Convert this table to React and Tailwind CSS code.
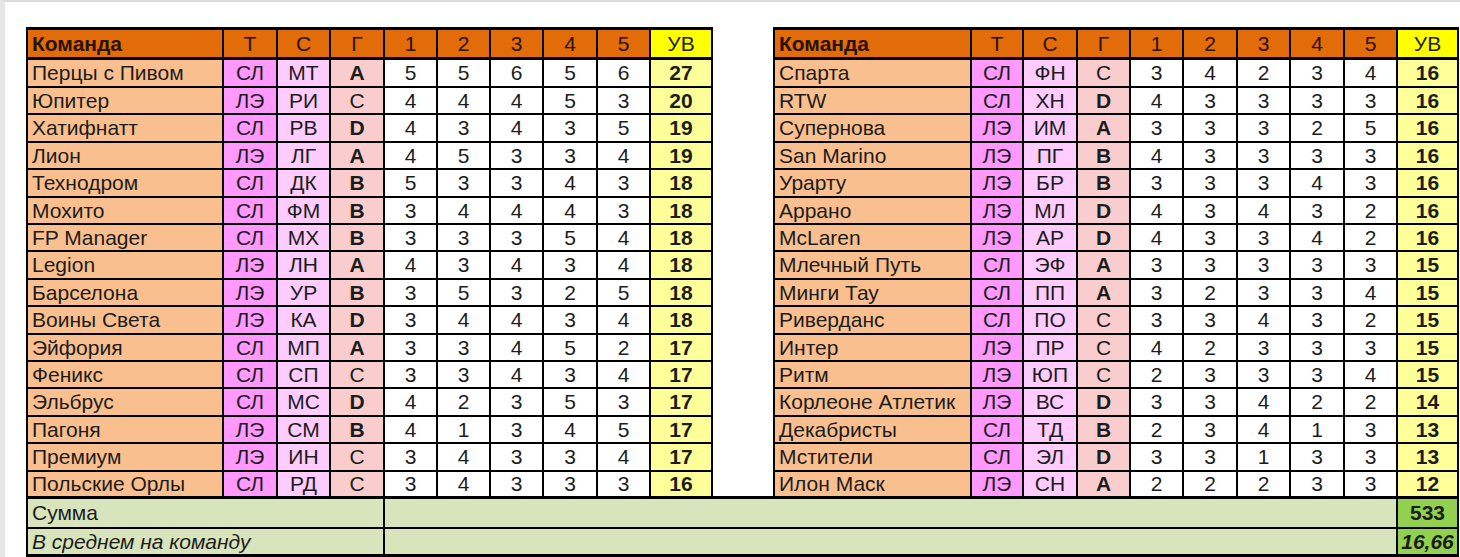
const left = [
  ['Перцы с Пивом', 'СЛ', 'МТ', 'A', 5, 5, 6, 5, 6, 27],
  ['Юпитер', 'ЛЭ', 'РИ', 'C', 4, 4, 4, 5, 3, 20],
  ['Хатифнатт', 'СЛ', 'РВ', 'D', 4, 3, 4, 3, 5, 19],
  ['Лион', 'ЛЭ', 'ЛГ', 'A', 4, 5, 3, 3, 4, 19],
  ['Технодром', 'СЛ', 'ДК', 'B', 5, 3, 3, 4, 3, 18],
  ['Мохито', 'СЛ', 'ФМ', 'B', 3, 4, 4, 4, 3, 18],
  ['FP Manager', 'СЛ', 'МХ', 'B', 3, 3, 3, 5, 4, 18],
  ['Legion', 'ЛЭ', 'ЛН', 'A', 4, 3, 4, 3, 4, 18],
  ['Барселона', 'ЛЭ', 'УР', 'B', 3, 5, 3, 2, 5, 18],
  ['Воины Света', 'ЛЭ', 'КА', 'D', 3, 4, 4, 3, 4, 18],
  ['Эйфория', 'СЛ', 'МП', 'A', 3, 3, 4, 5, 2, 17],
  ['Феникс', 'СЛ', 'СП', 'C', 3, 3, 4, 3, 4, 17],
  ['Эльбрус', 'СЛ', 'МС', 'D', 4, 2, 3, 5, 3, 17],
  ['Пагоня', 'ЛЭ', 'СМ', 'B', 4, 1, 3, 4, 5, 17],
  ['Премиум', 'ЛЭ', 'ИН', 'C', 3, 4, 3, 3, 4, 17],
  ['Польские Орлы', 'СЛ', 'РД', 'C', 3, 4, 3, 3, 3, 16],
];

const right = [
  ['Спарта', 'СЛ', 'ФН', 'C', 3, 4, 2, 3, 4, 16],
  ['RTW', 'СЛ', 'ХН', 'D', 4, 3, 3, 3, 3, 16],
  ['Супернова', 'ЛЭ', 'ИМ', 'A', 3, 3, 3, 2, 5, 16],
  ['San Marino', 'ЛЭ', 'ПГ', 'B', 4, 3, 3, 3, 3, 16],
  ['Урарту', 'ЛЭ', 'БР', 'B', 3, 3, 3, 4, 3, 16],
  ['Аррано', 'ЛЭ', 'МЛ', 'D', 4, 3, 4, 3, 2, 16],
  ['McLaren', 'ЛЭ', 'АР', 'D', 4, 3, 3, 4, 2, 16],
  ['Млечный Путь', 'СЛ', 'ЭФ', 'A', 3, 3, 3, 3, 3, 15],
  ['Минги Тау', 'СЛ', 'ПП', 'A', 3, 2, 3, 3, 4, 15],
  ['Риверданс', 'СЛ', 'ПО', 'C', 3, 3, 4, 3, 2, 15],
  ['Интер', 'ЛЭ', 'ПР', 'C', 4, 2, 3, 3, 3, 15],
  ['Ритм', 'ЛЭ', 'ЮП', 'C', 2, 3, 3, 3, 4, 15],
  ['Корлеоне Атлетик', 'ЛЭ', 'ВС', 'D', 3, 3, 4, 2, 2, 14],
  ['Декабристы', 'СЛ', 'ТД', 'B', 2, 3, 4, 1, 3, 13],
  ['Мстители', 'СЛ', 'ЭЛ', 'D', 3, 3, 1, 3, 3, 13],
  ['Илон Маск', 'ЛЭ', 'СН', 'A', 2, 2, 2, 3, 3, 12],
];

const heights = [28, 27, 28, 27, 28, 27, 27, 28, 27, 28, 27, 27, 28, 27, 28, 27];

const leftCols = [196, 54, 53, 54, 53, 53, 53, 54, 53, 62];
const rightCols = [197, 52, 54, 53, 53, 54, 53, 54, 53, 61];

const cell = 'border-2 border-black p-0 text-center';
const head = `${cell} border-t-[3px] border-b-[3px]`;

function HeaderCells() {
  return (
    <>
      <td className={`${head} bg-[#e26b0a] text-left pl-1 font-bold text-[#2a1200]`}>Команда</td>
      {['Т', 'С', 'Г', '1', '2', '3', '4', '5'].map((h) => (
        <td key={h} className={`${head} bg-[#e26b0a] text-[#2a1200]`}>{h}</td>
      ))}
      <td className={`${head} bg-[#ffff00]`}>УВ</td>
    </>
  );
}

function TeamCells({ row }) {
  const [name, t, s, g, ...rest] = row;
  const total = rest[5];
  return (
    <>
      <td className={`${cell} bg-[#fabf8f] text-left pl-1 whitespace-nowrap`}>{name}</td>
      <td className={`${cell} bg-[#ff99ff]`}>{t}</td>
      <td className={`${cell} bg-[#ffccff]`}>{s}</td>
      <td className={`${cell} bg-[#f9cdcd] ${g === 'C' ? '' : 'font-bold'}`}>{g}</td>
      {rest.slice(0, 5).map((v, i) => (
        <td key={i} className={`${cell} bg-white`}>{v}</td>
      ))}
      <td className={`${cell} bg-[#ffff99] font-bold`}>{total}</td>
    </>
  );
}

export default function App() {
  return (
    <div
      className="w-[1460px] h-[557px] bg-white border-t-2 border-t-[#dcdcdc] border-l-[5px] border-l-[#e6e6e6] overflow-hidden text-[#1c1c1c]"
      style={{ fontFamily: '"Liberation Sans", Arial, sans-serif' }}
    >
      <table className="border-collapse table-fixed ml-[21px] mt-[25px] text-[21px] leading-none">
        <colgroup>
          {leftCols.map((w, i) => (
            <col key={'l' + i} style={{ width: w }} />
          ))}
          <col style={{ width: 62 }} />
          {rightCols.map((w, i) => (
            <col key={'r' + i} style={{ width: w }} />
          ))}
        </colgroup>
        <tbody>
          <tr className="h-[30px]">
            <HeaderCells />
            <td className="bg-white p-0" />
            <HeaderCells />
          </tr>
          {left.map((row, i) => (
            <tr key={i} style={{ height: heights[i] }}>
              <TeamCells row={row} />
              <td className="bg-white p-0" />
              <TeamCells row={right[i]} />
            </tr>
          ))}
          <tr className="h-[30px]">
            <td colSpan={4} className={`${cell} border-t-[3px] bg-[#d8e4bc] text-left pl-1`}>Сумма</td>
            <td colSpan={16} className={`${cell} border-t-[3px] bg-[#d8e4bc]`} />
            <td className={`${cell} border-t-[3px] bg-[#92d050] font-bold`}>533</td>
          </tr>
          <tr className="h-[28px]">
            <td colSpan={4} className={`${cell} border-b-[3px] bg-[#d8e4bc] text-left pl-1 italic`}>В среднем на команду</td>
            <td colSpan={16} className={`${cell} border-b-[3px] bg-[#d8e4bc]`} />
            <td className={`${cell} border-b-[3px] bg-[#92d050] font-bold italic`}>16,66</td>
          </tr>
        </tbody>
      </table>
    </div>
  );
}
